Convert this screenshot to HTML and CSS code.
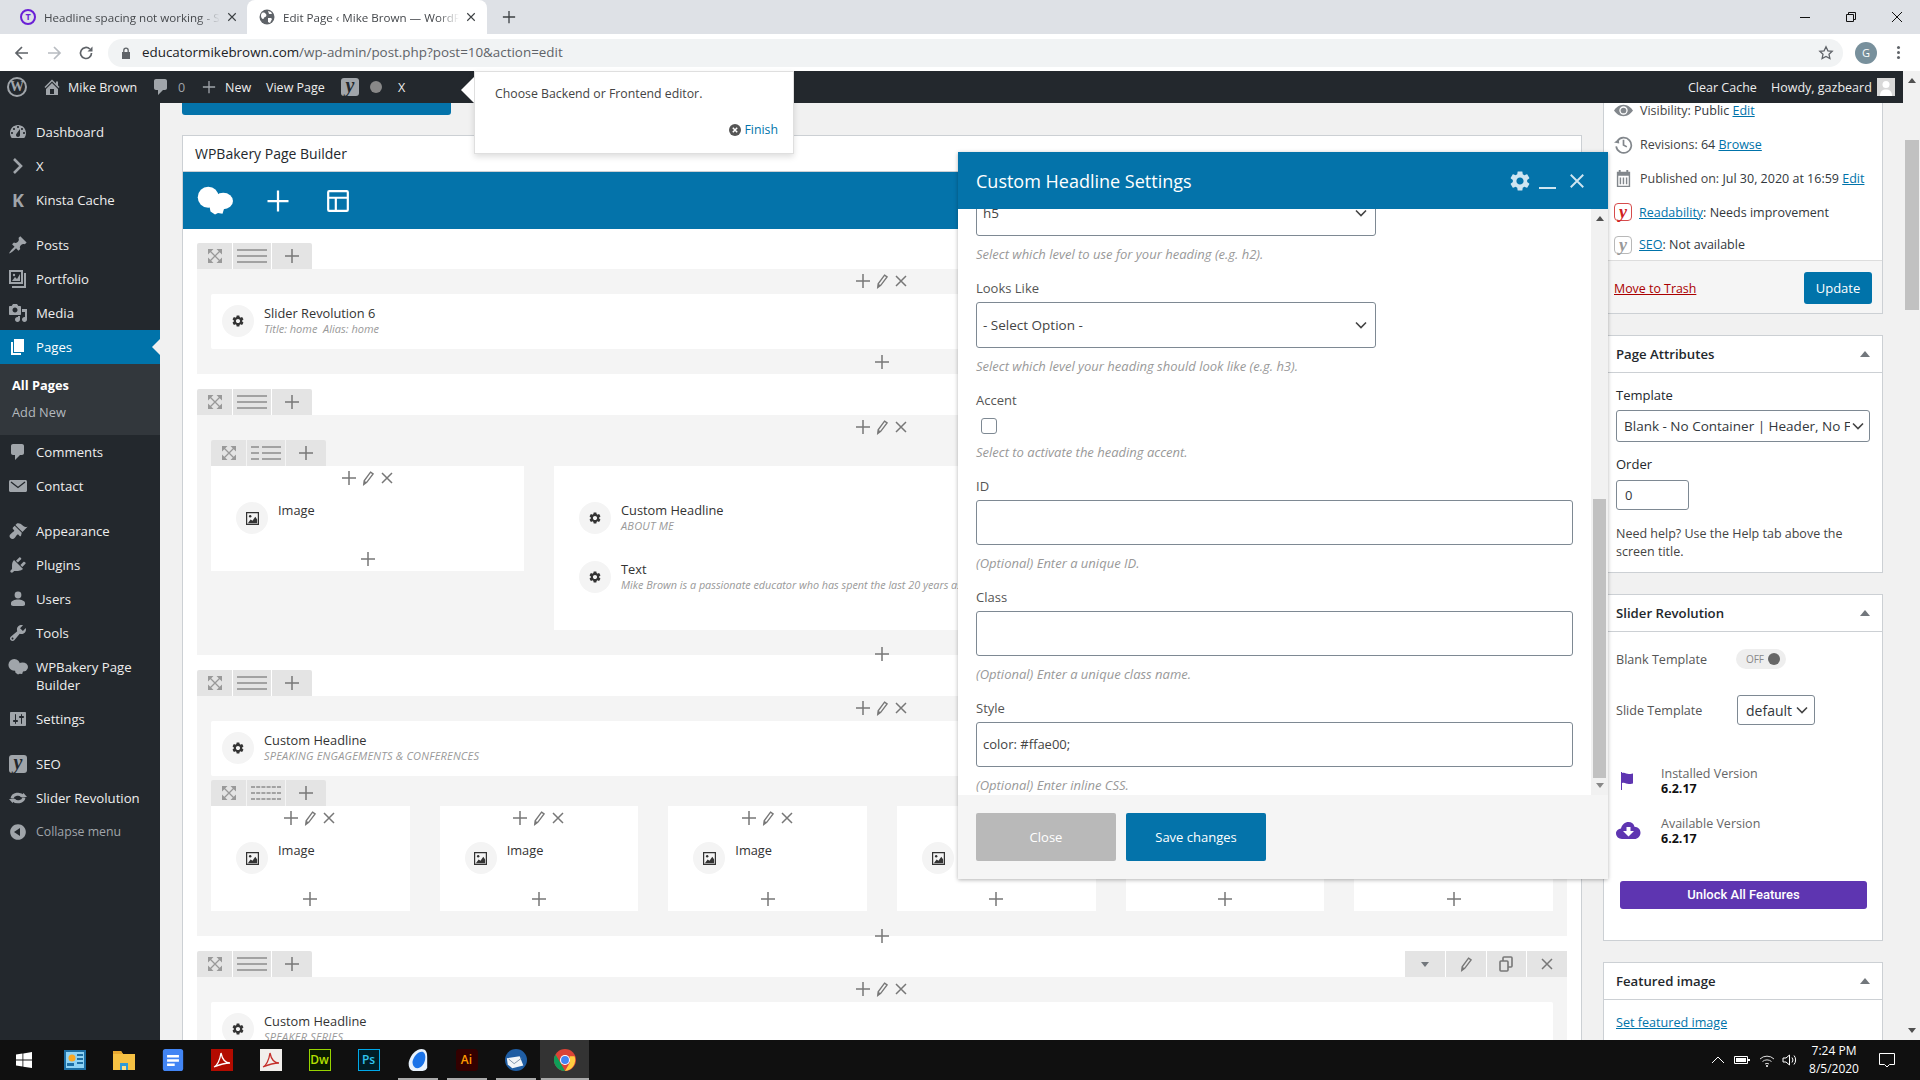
FILE: index.html
```html
<!DOCTYPE html>
<html lang="en">
<head>
<meta charset="utf-8">
<title>Edit Page ‹ Mike Brown — WordPress</title>
<link rel="stylesheet" href="styles.css">
</head>
<body>
<svg class="defs" aria-hidden="true">
  <defs>
    <symbol id="dash" viewBox="0 0 20 20"><path fill="currentColor" fill-rule="evenodd" d="M3.76 16h12.48c1.100-1.370 1.760-3.110 1.760-5 0-4.420-3.580-8-8-8s-8 3.580-8 8c0 1.890.66 3.630 1.760 5zM10 4c.55 0 1 .45 1 1s-.45 1-1 1-1-.45-1-1 .45-1 1-1zM6 6c.55 0 1 .45 1 1s-.45 1-1 1-1-.45-1-1 .45-1 1-1zm8 0c.55 0 1 .45 1 1s-.45 1-1 1-1-.45-1-1 .45-1 1-1zm-5.370 5.550L12 7v6c0 1.100-.9 2-2 2s-2-.9-2-2c0-.57.24-1.080.63-1.450zM4 10c.55 0 1 .45 1 1s-.45 1-1 1-1-.45-1-1 .45-1 1-1zm12 0c.55 0 1 .45 1 1s-.45 1-1 1-1-.45-1-1 .45-1 1-1z"/></symbol>
    <symbol id="chev" viewBox="0 0 20 20"><path fill="none" stroke="currentColor" stroke-width="2.600" d="M6 3l7 7-7 7"/></symbol>
    <symbol id="pin" viewBox="0 0 20 20"><path fill="currentColor" d="M10.440 3.020l1.820-1.820 6.360 6.350-1.830 1.820c-1.050-.68-2.480-.57-3.410.36l-.75.75c-.92.93-1.040 2.350-.35 3.410l-1.830 1.820-2.410-2.410-2.800 2.790c-.42.42-3.380 2.710-3.800 2.290s1.860-3.390 2.280-3.810l2.790-2.790L4.100 9.360l1.830-1.820c1.050.69 2.480.57 3.400-.36l.75-.75c.93-.92 1.050-2.350.36-3.410z"/></symbol>
    <symbol id="folio" viewBox="0 0 20 20"><path fill="currentColor" fill-rule="evenodd" d="M1 1h14v14H1zM3 3v10h10V3zM16 4h2v15H4v-2h12z"/><path fill="currentColor" d="M4 12l3-4 2 2 3-5v7z"/><circle cx="6" cy="6" r="1.200" fill="currentColor"/></symbol>
    <symbol id="media" viewBox="0 0 20 20"><path fill="currentColor" fill-rule="evenodd" d="M13 11V4c0-.55-.45-1-1-1h-1.670L9 1H5L3.670 3H2c-.55 0-1 .45-1 1v7c0 .55.45 1 1 1h10c.55 0 1-.45 1-1zM7 4.500c1.380 0 2.500 1.120 2.500 2.500S8.380 9.500 7 9.500 4.500 8.380 4.500 7 5.620 4.500 7 4.500z"/><path fill="currentColor" d="M14 6h5v10.500c0 1.380-1.120 2.500-2.500 2.500S14 17.880 14 16.500s1.120-2.500 2.500-2.500c.17 0 .34.020.5.050V9h-3V6zm-4 8.050V13h2v3.500c0 1.380-1.120 2.500-2.500 2.500S7 17.880 7 16.500 8.120 14 9.500 14c.17 0 .34.020.5.050z"/></symbol>
    <symbol id="page" viewBox="0 0 20 20"><path fill="currentColor" d="M6 15V2h10v13H6zm-1 1h8v2H3V5h2v11z"/></symbol>
    <symbol id="comment" viewBox="0 0 20 20"><path fill="currentColor" d="M5 2h9c1.100 0 2 .9 2 2v7c0 1.100-.9 2-2 2h-2l-5 5v-5H5c-1.100 0-2-.9-2-2V4c0-1.100.9-2 2-2z"/></symbol>
    <symbol id="mail" viewBox="0 0 20 20"><path fill="currentColor" d="M19 14.500v-9c0-.83-.67-1.500-1.500-1.500H2.500C1.670 4 1 4.670 1 5.500v9c0 .83.67 1.500 1.500 1.500h15c.83 0 1.500-.67 1.500-1.500z"/><path fill="none" stroke="#23282d" stroke-width="1.300" d="M3 6l7 5.500L17 6"/></symbol>
    <symbol id="brush" viewBox="0 0 20 20"><path fill="currentColor" d="M14.480 11.060L7.410 3.990l1.500-1.500c.5-.56 2.300-.47 3.510.32 1.210.8 1.430 1.280 2.910 2.100 1.180.64 2.450 1.260 4.230.91zm-.71.71L6.700 4.700 4.930 6.470c-.39.39-.39 1.020 0 1.410l1.060 1.060c.39.39.39 1.030 0 1.420-.6.6-1.430 1.110-2.210 1.690-.35.26-.7.53-1.010.84C1.430 13.710.96 15.650 2.390 17.080c1.430 1.430 3.360.96 4.200-.04.31-.31.58-.66.84-1.010.58-.78 1.090-1.610 1.690-2.210.39-.39 1.020-.39 1.410 0l1.060 1.060c.39.39 1.020.39 1.410 0z"/></symbol>
    <symbol id="plug" viewBox="0 0 20 20"><path fill="currentColor" d="M13.110 4.360L9.870 7.600 8 5.730l3.240-3.240c.35-.34 1.050-.2 1.560.32.52.51.66 1.210.31 1.550zm-8 1.770l.91-1.120 9.010 9.010-1.190.84c-.71.71-2.630 1.160-3.820 1.160H6.140L4.900 17.260c-.59.59-1.540.59-2.120 0-.59-.58-.59-1.530 0-2.120l1.240-1.240v-3.880c0-1.130.4-3.190 1.090-3.890zm7.260 3.970l3.240-3.240c.34-.35 1.040-.21 1.550.31.52.51.66 1.210.31 1.550l-3.240 3.250z"/></symbol>
    <symbol id="user" viewBox="0 0 20 20"><circle cx="10" cy="6" r="3.400" fill="currentColor"/><path fill="currentColor" d="M10 10.500c3.200 0 7 1.200 7 3.500v1.600c0 1-1 1.400-2 1.400H5c-1 0-2-.4-2-1.400V14c0-2.300 3.800-3.500 7-3.500z"/></symbol>
    <symbol id="wrench" viewBox="0 0 20 20"><path fill="currentColor" fill-rule="evenodd" d="M16.680 9.770c-1.340 1.340-3.300 1.670-4.950.99l-5.410 6.520c-.99.99-2.590.99-3.580 0s-.99-2.590 0-3.570l6.520-5.420c-.68-1.650-.35-3.610.99-4.950 1.280-1.280 3.120-1.620 4.720-1.060l-2.890 2.890 2.820 2.820 2.860-2.870c.53 1.590.19 3.410-1.080 4.670zM3.810 16.210c.4.390 1.030.39 1.420 0 .4-.4.4-1.030 0-1.430-.39-.39-1.020-.39-1.420 0-.39.4-.39 1.030 0 1.430z"/></symbol>
    <symbol id="cloud" viewBox="0 0 24 20"><circle cx="7.500" cy="7.500" r="7" fill="currentColor"/><ellipse cx="17.500" cy="10" rx="6.500" ry="5.500" fill="currentColor"/><path fill="currentColor" d="M8 12h11l-2 6.500-3-.5-2 1-3-2z"/></symbol>
    <symbol id="sliders" viewBox="0 0 20 20"><path fill="currentColor" fill-rule="evenodd" d="M18 16V4c0-.55-.45-1-1-1H3c-.55 0-1 .45-1 1v12c0 .55.45 1 1 1h14c.55 0 1-.45 1-1zM8 11h1c.55 0 1 .45 1 1s-.45 1-1 1H8v1.500c0 .28-.22.5-.5.5s-.5-.22-.5-.5V13H6c-.55 0-1-.45-1-1s.45-1 1-1h1V5.500c0-.28.22-.5.5-.5s.5.22.5.5V11zm5-2h-1c-.55 0-1-.45-1-1s.45-1 1-1h1V5.500c0-.28.22-.5.5-.5s.5.22.5.5V7h1c.55 0 1 .45 1 1s-.45 1-1 1h-1v5.500c0 .28-.22.5-.5.5s-.5-.22-.5-.5V9z"/></symbol>
    <symbol id="revo" viewBox="0 0 20 20"><path fill="none" stroke="currentColor" stroke-width="3" d="M4 10.500a6 5 0 0 1 11-2M16 9.500a6 5 0 0 1-11 2"/><path fill="currentColor" d="M12 9h7l-3.500-4zM8 11H1l3.500 4z"/></symbol>
    <symbol id="collapse" viewBox="0 0 20 20"><path fill="currentColor" fill-rule="evenodd" d="M10 2.160c4.330 0 7.840 3.510 7.840 7.840s-3.510 7.840-7.840 7.840S2.160 14.330 2.160 10 5.670 2.160 10 2.160zm2 11.840V6l-6 4z"/></symbol>
    <symbol id="home" viewBox="0 0 20 20"><path fill="currentColor" fill-rule="evenodd" d="M16 8.500l1.530 1.530-1.060 1.060L10 4.620l-6.470 6.470-1.060-1.060L10 2.500l4 4v-2h2v4zM10 6.040l6 5.990V18H4v-5.970zM12 17v-5H8v5h4z"/></symbol>
    <symbol id="plus" viewBox="0 0 16 16"><path fill="none" stroke="currentColor" stroke-width="1.500" d="M8 1v14M1 8h14"/></symbol>
    <symbol id="times" viewBox="0 0 16 16"><path fill="none" stroke="currentColor" stroke-width="1.500" d="M3 3l10 10M13 3L3 13"/></symbol>
    <symbol id="pencil" viewBox="0 0 16 20"><path fill="none" stroke="currentColor" stroke-width="1.600" d="M11 2.500l3 2-7.500 10-3.500 2.500.5-4.300z"/><path fill="currentColor" d="M3.500 12.700l3 1.800-3.500 2.500z"/></symbol>
    <symbol id="expand" viewBox="0 0 14 14"><path fill="none" stroke="currentColor" stroke-width="1.300" d="M2 2l10 10M12 2L2 12"/><path fill="currentColor" d="M0 0h5.500L0 5.500zM14 0v5.500L8.500 0zM0 14V8.500L5.500 14zM14 14H8.500L14 8.500z"/></symbol>
    <symbol id="lines" viewBox="0 0 30 14"><path fill="currentColor" d="M0 0h30v2H0zM0 6h30v2H0zM0 12h30v2H0z"/></symbol>
    <symbol id="lines2" viewBox="0 0 30 14"><path fill="currentColor" d="M0 0h8v2H0zM11 0h19v2H11zM0 6h8v2H0zM11 6h19v2H11zM0 12h8v2H0zM11 12h19v2H11z"/></symbol>
    <symbol id="lines6" viewBox="0 0 30 14"><path fill="none" stroke="currentColor" stroke-width="2" stroke-dasharray="4 1.200" d="M0 1h30M0 7h30M0 13h30"/></symbol>
    <symbol id="gear" viewBox="0 0 24 24"><path fill="currentColor" fill-rule="evenodd" d="M19.140 12.940c.04-.3.06-.61.06-.94 0-.32-.02-.64-.07-.94l2.030-1.580c.18-.14.23-.41.12-.61l-1.920-3.320c-.12-.22-.37-.29-.59-.22l-2.390.96c-.5-.38-1.030-.7-1.620-.94l-.36-2.540c-.04-.24-.24-.41-.48-.41h-3.840c-.24 0-.43.17-.47.41l-.36 2.540c-.59.24-1.130.57-1.620.94l-2.390-.96c-.22-.08-.47 0-.59.22L2.740 8.870c-.12.21-.08.47.12.61l2.030 1.580c-.05.3-.09.63-.09.94s.02.64.07.94l-2.030 1.580c-.18.14-.23.41-.12.61l1.920 3.320c.12.22.37.29.59.22l2.390-.96c.5.38 1.030.7 1.620.94l.36 2.540c.05.24.24.41.48.41h3.840c.24 0 .44-.17.47-.41l.36-2.540c.59-.24 1.130-.56 1.620-.94l2.390.96c.22.08.47 0 .59-.22l1.920-3.320c.12-.22.07-.47-.12-.61l-2.010-1.580zM12 15.600c-1.980 0-3.600-1.620-3.600-3.600s1.620-3.600 3.600-3.600 3.600 1.620 3.600 3.600-1.620 3.600-3.600 3.600z"/></symbol>
    <symbol id="pic" viewBox="0 0 14 14"><path fill="currentColor" fill-rule="evenodd" d="M0 0h14v14H0zM1.300 1.300v11.400h11.400V1.300z"/><path fill="currentColor" d="M2 12l3-4 2 1.500L10 5l2 3v4z"/><circle cx="4.500" cy="4.500" r="1.300" fill="currentColor"/></symbol>
    <symbol id="caret" viewBox="0 0 10 6"><path fill="currentColor" d="M5 0l5 6H0z"/></symbol>
    <symbol id="vee" viewBox="0 0 12 8"><path fill="none" stroke="currentColor" stroke-width="1.600" d="M1 1.500l5 5 5-5"/></symbol>
  </defs>
</svg>

<div class="app">
  <header class="tabstrip">
    <div class="tab">
      <span class="fav fav-t">T</span>
      <span class="tab-title">Headline spacing not working - Support</span>
      <svg class="tab-x"><use href="#times"/></svg>
    </div>
    <div class="tab tab-on">
      <svg class="fav" viewBox="0 0 16 16"><circle cx="8" cy="8" r="7.500" fill="#5f6368"/><path fill="#fff" d="M3 4c2-1 3 0 4 1s0 3-1 3-1 2-2 2-2-2-2-3 0-2 1-3zM9 9h3l1 1-2 4-2-1zM9 2l3 1 1 2-3 0z"/></svg>
      <span class="tab-title">Edit Page ‹ Mike Brown — WordPress</span>
      <svg class="tab-x"><use href="#times"/></svg>
    </div>
    <svg class="tab-new"><use href="#plus"/></svg>
    <div class="winbtns">
      <svg viewBox="0 0 12 12"><path fill="none" stroke="#111" d="M1 6.500h10"/></svg>
      <svg viewBox="0 0 12 12"><path fill="none" stroke="#111" d="M1.500 3.500h7v7h-7zM3.500 3.500v-2h7v7h-2"/></svg>
      <svg viewBox="0 0 12 12"><path fill="none" stroke="#111" d="M1 1l10 10M11 1L1 11"/></svg>
    </div>
  </header>

  <nav class="toolbar">
    <svg class="nav-i" viewBox="0 0 16 16"><path fill="none" stroke="#5f6368" stroke-width="1.700" d="M14 8H2.500M8 2L2 8l6 6"/></svg>
    <svg class="nav-i nav-off" viewBox="0 0 16 16"><path fill="none" stroke="#b8bcc1" stroke-width="1.700" d="M2 8h11.500M8 2l6 6-6 6"/></svg>
    <svg class="nav-i" viewBox="0 0 16 16"><path fill="none" stroke="#5f6368" stroke-width="1.700" d="M13.500 8a5.500 5.500 0 1 1-1.700-4"/><path fill="#5f6368" d="M14.500 1.500v5h-5z"/></svg>
    <div class="omni">
      <svg class="lock" viewBox="0 0 10 12"><path fill="#5f6368" d="M1 5h8v7H1z"/><path fill="none" stroke="#5f6368" stroke-width="1.300" d="M2.800 5V3.400a2.200 2.200 0 0 1 4.400 0V5"/></svg>
      <span class="url"><b>educatormikebrown.com</b>/wp-admin/post.php?post=10&amp;action=edit</span>
      <svg class="star" viewBox="0 0 16 16"><path fill="none" stroke="#5f6368" stroke-width="1.300" d="M8 1.800l1.900 4 4.300.5-3.200 3 .9 4.300L8 11.500l-3.900 2.100.9-4.300-3.200-3 4.300-.5z"/></svg>
    </div>
    <span class="avatar">G</span>
    <span class="kebab"></span>
  </nav>

  <div class="window">
    <div class="page">
      <div class="adminbar">
        <span class="wplogo">W</span>
        <svg class="ab-i ab-home"><use href="#home"/></svg>
        <span class="ab-t ab-name">Mike Brown</span>
        <svg class="ab-i ab-com"><use href="#comment"/></svg>
        <span class="ab-count">0</span>
        <svg class="ab-plus"><use href="#plus"/></svg>
        <span class="ab-t ab-new">New</span>
        <span class="ab-t ab-view">View Page</span>
        <span class="yoast ab-yoast">y</span>
        <span class="ab-dot"></span>
        <span class="ab-t ab-x">X</span>
        <span class="ab-spacer"></span>
        <span class="ab-t ab-clear">Clear Cache</span>
        <span class="ab-t ab-howdy">Howdy, gazbeard</span>
        <span class="ab-ava"><svg viewBox="0 0 18 18"><circle cx="9" cy="6.500" r="3.500" fill="#fff"/><path fill="#fff" d="M3 18c0-5 2.500-6.500 6-6.500s6 1.500 6 6.500z"/></svg></span>
      </div>

      <div class="wpbody">
        <aside class="sidebar">
          <ul class="menu">
            <li class="mi"><svg class="mi-i"><use href="#dash"/></svg><span>Dashboard</span></li>
            <li class="mi"><svg class="mi-i"><use href="#chev"/></svg><span>X</span></li>
            <li class="mi"><span class="mi-k">K</span><span>Kinsta Cache</span></li>
            <li class="msep"></li>
            <li class="mi"><svg class="mi-i"><use href="#pin"/></svg><span>Posts</span></li>
            <li class="mi"><svg class="mi-i"><use href="#folio"/></svg><span>Portfolio</span></li>
            <li class="mi"><svg class="mi-i"><use href="#media"/></svg><span>Media</span></li>
            <li class="mi mi-on"><svg class="mi-i"><use href="#page"/></svg><span>Pages</span></li>
            <li class="sub"><div class="sub-on">All Pages</div><div class="sub-i">Add New</div></li>
            <li class="mi"><svg class="mi-i"><use href="#comment"/></svg><span>Comments</span></li>
            <li class="mi"><svg class="mi-i"><use href="#mail"/></svg><span>Contact</span></li>
            <li class="msep"></li>
            <li class="mi"><svg class="mi-i"><use href="#brush"/></svg><span>Appearance</span></li>
            <li class="mi"><svg class="mi-i"><use href="#plug"/></svg><span>Plugins</span></li>
            <li class="mi"><svg class="mi-i"><use href="#user"/></svg><span>Users</span></li>
            <li class="mi"><svg class="mi-i"><use href="#wrench"/></svg><span>Tools</span></li>
            <li class="mi mi-two"><svg class="mi-i"><use href="#cloud"/></svg><span>WPBakery Page Builder</span></li>
            <li class="mi"><svg class="mi-i"><use href="#sliders"/></svg><span>Settings</span></li>
            <li class="msep"></li>
            <li class="mi"><span class="yoast mi-yoast">y</span><span>SEO</span></li>
            <li class="mi"><svg class="mi-i"><use href="#revo"/></svg><span>Slider Revolution</span></li>
            <li class="mi mi-dim"><svg class="mi-i"><use href="#collapse"/></svg><span>Collapse menu</span></li>
          </ul>
        </aside>

        <main class="content">
          <section class="leftcol">
            <div class="topbtn"></div>
            <div class="builder">
              <h2 class="builder-h">WPBakery Page Builder</h2>
              <div class="vc-bar">
                <svg class="vc-cloud"><use href="#cloud"/></svg>
                <svg class="vc-plus"><use href="#plus"/></svg>
                <svg class="vc-tpl" viewBox="0 0 22 22"><path fill="none" stroke="currentColor" stroke-width="2" d="M2 3a1 1 0 0 1 1-1h16a1 1 0 0 1 1 1v16a1 1 0 0 1-1 1H3a1 1 0 0 1-1-1zM2 8h18M9 8v12"/></svg>
              </div>
              <div class="rows">

                <div class="rowbar">
                  <span class="rb rb-a"><svg class="i-exp"><use href="#expand"/></svg></span>
                  <span class="rb rb-b"><svg class="i-lines"><use href="#lines"/></svg></span>
                  <span class="rb rb-c"><svg class="i-plus"><use href="#plus"/></svg></span>
                </div>
                <div class="row">
                  <div class="ctl"><svg class="i-plus"><use href="#plus"/></svg><svg class="i-pen"><use href="#pencil"/></svg><svg class="i-x"><use href="#times"/></svg></div>
                  <div class="el el-row">
                    <span class="el-ic"><svg class="i-gear"><use href="#gear"/></svg></span>
                    <div><div class="el-t">Slider Revolution 6</div><div class="el-s">Title: home&nbsp; Alias: home</div></div>
                  </div>
                  <div class="foot"><svg class="i-plus"><use href="#plus"/></svg></div>
                </div>

                <div class="rowbar">
                  <span class="rb rb-a"><svg class="i-exp"><use href="#expand"/></svg></span>
                  <span class="rb rb-b"><svg class="i-lines"><use href="#lines"/></svg></span>
                  <span class="rb rb-c"><svg class="i-plus"><use href="#plus"/></svg></span>
                </div>
                <div class="row">
                  <div class="ctl"><svg class="i-plus"><use href="#plus"/></svg><svg class="i-pen"><use href="#pencil"/></svg><svg class="i-x"><use href="#times"/></svg></div>
                  <div class="rowbar rowbar-in">
                    <span class="rb rb-a"><svg class="i-exp"><use href="#expand"/></svg></span>
                    <span class="rb rb-b"><svg class="i-lines"><use href="#lines2"/></svg></span>
                    <span class="rb rb-c"><svg class="i-plus"><use href="#plus"/></svg></span>
                  </div>
                  <div class="cols cols-2">
                    <div class="col col-short">
                      <div class="ctl ctl-col"><svg class="i-plus"><use href="#plus"/></svg><svg class="i-pen"><use href="#pencil"/></svg><svg class="i-x"><use href="#times"/></svg></div>
                      <div class="el">
                        <span class="el-ic"><svg class="i-pic"><use href="#pic"/></svg></span>
                        <div class="el-t">Image</div>
                      </div>
                      <div class="foot-col"><svg class="i-plus"><use href="#plus"/></svg></div>
                    </div>
                    <div class="col">
                      <div class="ctl ctl-col"></div>
                      <div class="el">
                        <span class="el-ic"><svg class="i-gear"><use href="#gear"/></svg></span>
                        <div><div class="el-t">Custom Headline</div><div class="el-s el-caps">ABOUT ME</div></div>
                      </div>
                      <div class="el el-next">
                        <span class="el-ic"><svg class="i-gear"><use href="#gear"/></svg></span>
                        <div><div class="el-t">Text</div><div class="el-s el-long">Mike Brown is a passionate educator who has spent the last 20 years as an educator and speaker</div></div>
                      </div>
                    </div>
                  </div>
                  <div class="foot foot-low"><svg class="i-plus"><use href="#plus"/></svg></div>
                </div>

                <div class="rowbar">
                  <span class="rb rb-a"><svg class="i-exp"><use href="#expand"/></svg></span>
                  <span class="rb rb-b"><svg class="i-lines"><use href="#lines"/></svg></span>
                  <span class="rb rb-c"><svg class="i-plus"><use href="#plus"/></svg></span>
                </div>
                <div class="row">
                  <div class="ctl"><svg class="i-plus"><use href="#plus"/></svg><svg class="i-pen"><use href="#pencil"/></svg><svg class="i-x"><use href="#times"/></svg></div>
                  <div class="el el-row">
                    <span class="el-ic"><svg class="i-gear"><use href="#gear"/></svg></span>
                    <div><div class="el-t">Custom Headline</div><div class="el-s el-caps">SPEAKING ENGAGEMENTS &amp; CONFERENCES</div></div>
                  </div>
                  <div class="rowbar rowbar-in rowbar-gap">
                    <span class="rb rb-a"><svg class="i-exp"><use href="#expand"/></svg></span>
                    <span class="rb rb-b"><svg class="i-lines"><use href="#lines6"/></svg></span>
                    <span class="rb rb-c"><svg class="i-plus"><use href="#plus"/></svg></span>
                  </div>
                  <div class="cols cols-6">
                    <div class="col">
                      <div class="ctl ctl-col"><svg class="i-plus"><use href="#plus"/></svg><svg class="i-pen"><use href="#pencil"/></svg><svg class="i-x"><use href="#times"/></svg></div>
                      <div class="el"><span class="el-ic"><svg class="i-pic"><use href="#pic"/></svg></span><div class="el-t">Image</div></div>
                      <div class="foot-col"><svg class="i-plus"><use href="#plus"/></svg></div>
                    </div>
                    <div class="col">
                      <div class="ctl ctl-col"><svg class="i-plus"><use href="#plus"/></svg><svg class="i-pen"><use href="#pencil"/></svg><svg class="i-x"><use href="#times"/></svg></div>
                      <div class="el"><span class="el-ic"><svg class="i-pic"><use href="#pic"/></svg></span><div class="el-t">Image</div></div>
                      <div class="foot-col"><svg class="i-plus"><use href="#plus"/></svg></div>
                    </div>
                    <div class="col">
                      <div class="ctl ctl-col"><svg class="i-plus"><use href="#plus"/></svg><svg class="i-pen"><use href="#pencil"/></svg><svg class="i-x"><use href="#times"/></svg></div>
                      <div class="el"><span class="el-ic"><svg class="i-pic"><use href="#pic"/></svg></span><div class="el-t">Image</div></div>
                      <div class="foot-col"><svg class="i-plus"><use href="#plus"/></svg></div>
                    </div>
                    <div class="col">
                      <div class="ctl ctl-col"></div>
                      <div class="el"><span class="el-ic"><svg class="i-pic"><use href="#pic"/></svg></span><div class="el-t">Image</div></div>
                      <div class="foot-col"><svg class="i-plus"><use href="#plus"/></svg></div>
                    </div>
                    <div class="col">
                      <div class="ctl ctl-col"></div>
                      <div class="el"></div>
                      <div class="foot-col"><svg class="i-plus"><use href="#plus"/></svg></div>
                    </div>
                    <div class="col">
                      <div class="ctl ctl-col"></div>
                      <div class="el"></div>
                      <div class="foot-col"><svg class="i-plus"><use href="#plus"/></svg></div>
                    </div>
                  </div>
                  <div class="foot foot-edge"><svg class="i-plus"><use href="#plus"/></svg></div>
                </div>

                <div class="rowbar rowbar-split">
                  <div class="rb-group">
                    <span class="rb rb-a"><svg class="i-exp"><use href="#expand"/></svg></span>
                    <span class="rb rb-b"><svg class="i-lines"><use href="#lines"/></svg></span>
                    <span class="rb rb-c"><svg class="i-plus"><use href="#plus"/></svg></span>
                  </div>
                  <div class="rb-group">
                    <span class="rb rb-r"><svg class="i-caret-d"><use href="#caret"/></svg></span>
                    <span class="rb rb-r"><svg class="i-pen"><use href="#pencil"/></svg></span>
                    <span class="rb rb-r"><svg class="i-copy" viewBox="0 0 14 16"><path fill="none" stroke="currentColor" stroke-width="1.600" d="M1 6a1 1 0 0 1 1-1h6a1 1 0 0 1 1 1v8a1 1 0 0 1-1 1H2a1 1 0 0 1-1-1zM4 5V2a1 1 0 0 1 1-1h7a1 1 0 0 1 1 1v8a1 1 0 0 1-1 1H9"/></svg></span>
                    <span class="rb rb-r"><svg class="i-x"><use href="#times"/></svg></span>
                  </div>
                </div>
                <div class="row">
                  <div class="ctl"><svg class="i-plus"><use href="#plus"/></svg><svg class="i-pen"><use href="#pencil"/></svg><svg class="i-x"><use href="#times"/></svg></div>
                  <div class="el el-row">
                    <span class="el-ic"><svg class="i-gear"><use href="#gear"/></svg></span>
                    <div><div class="el-t">Custom Headline</div><div class="el-s el-caps">SPEAKER SERIES</div></div>
                  </div>
                </div>

              </div>
            </div>
          </section>

          <section class="rightcol">
            <div class="box box-pub">
              <div class="pub-row"><svg class="pub-i" viewBox="0 0 20 20"><path fill="#82878c" fill-rule="evenodd" d="M10 4c4.400 0 8 3 10 6-2 3-5.600 6-10 6S2 13 0 10c2-3 5.600-6 10-6zm0 1.600A4.400 4.400 0 1 0 10 14.400 4.400 4.400 0 0 0 10 5.600z"/><circle cx="10" cy="10" r="3" fill="#82878c"/></svg><span>Visibility: <b>Public</b> <a>Edit</a></span></div>
              <div class="pub-row"><svg class="pub-i" viewBox="0 0 20 20"><path fill="none" stroke="#82878c" stroke-width="1.800" d="M3.500 6.500A8 8 0 1 1 2.300 12M10 5v5.500l3.500 2"/><path fill="#82878c" d="M0 8l5-3.500L5.500 9z"/></svg><span>Revisions: <b>64</b> <a>Browse</a></span></div>
              <div class="pub-row"><svg class="pub-i" viewBox="0 0 20 20"><path fill="#82878c" fill-rule="evenodd" d="M3 3h2V1h2v2h6V1h2v2h2v16H3zM4.500 7v10.500h11V7z"/><path fill="#82878c" d="M6 9h1.500v7H6zM9.200 9h1.500v7H9.200zM12.500 9H14v7h-1.500z"/></svg><span>Published on: <b>Jul 30, 2020 at 16:59</b> <a>Edit</a></span></div>
              <div class="pub-row"><span class="yoast-out yoast-red">y</span><span><a>Readability</a>: <b>Needs improvement</b></span></div>
              <div class="pub-row pub-last"><span class="yoast-out">y</span><span><a>SEO</a>: <b>Not available</b></span></div>
              <div class="pub-foot"><a class="trash">Move to Trash</a><span class="btn-update">Update</span></div>
            </div>

            <div class="box box-attr">
              <div class="box-h"><h3>Page Attributes</h3><svg class="i-caret"><use href="#caret"/></svg></div>
              <div class="box-b">
                <div class="f-l">Template</div>
                <div class="sel sel-tpl"><span class="sel-clip">Blank - No Container | Header, No Footer</span><svg class="i-vee"><use href="#vee"/></svg></div>
                <div class="f-l f-l2">Order</div>
                <div class="num">0</div>
                <p class="help">Need help? Use the Help tab above the screen title.</p>
              </div>
            </div>

            <div class="box box-rev">
              <div class="box-h"><h3>Slider Revolution</h3><svg class="i-caret"><use href="#caret"/></svg></div>
              <div class="box-b">
                <div class="rev-line"><span class="rev-l">Blank Template</span><span class="toggle"><span>OFF</span><i></i></span></div>
                <div class="rev-line rev-line2"><span class="rev-l">Slide Template</span><span class="sel sel-def">default<svg class="i-vee"><use href="#vee"/></svg></span></div>
                <div class="ver ver-1"><svg class="ver-i" viewBox="0 0 25 18"><path fill="#5e35b1" d="M5 0h1v18H5zM6 1c3-1 4 1 7 1 2 0 4-.5 4-.5v10s-2 .5-4 .5c-3 0-4-2-7-1z"/></svg><div><div class="ver-l">Installed Version</div><div class="ver-n">6.2.17</div></div></div>
                <div class="ver"><svg class="ver-i" viewBox="0 0 25 18"><path fill="#5e35b1" d="M12.500 0c3 0 5.500 2 6 4.700 3.400.2 6 2.300 6 6 0 3.700-3 6.300-6 6.300H6c-3.200 0-6-2.300-6-5.700C0 8.500 2.500 6.800 5 6.500 6 2.600 9 0 12.500 0z"/><path fill="#fff" d="M10.500 5h4v4H18l-5.500 5.500L7 9h3.500z"/></svg><div><div class="ver-l">Available Version</div><div class="ver-n">6.2.17</div></div></div>
                <div class="unlock">Unlock All Features</div>
              </div>
            </div>

            <div class="box box-feat">
              <div class="box-h"><h3>Featured image</h3><svg class="i-caret"><use href="#caret"/></svg></div>
              <div class="box-b"><a class="setimg">Set featured image</a></div>
            </div>
          </section>
        </main>
      </div>
    </div>

    <div class="pagebar">
      <svg class="pb-up"><use href="#caret"/></svg>
      <span class="pb-thumb"></span>
      <span class="pb-fill"></span>
      <svg class="pb-down"><use href="#caret"/></svg>
    </div>
  </div>

  <footer class="taskbar">
    <span class="tk tk-start"><svg viewBox="0 0 16 16"><path fill="#fff" d="M0 2.400L6.500 1.500v6H0zM7.300 1.400L16 0v7.500H7.300zM0 8.400h6.500v6L0 13.600zM7.300 8.400H16V16l-8.700-1.300z"/></svg></span>
    <span class="tk"><svg viewBox="0 0 22 20"><path fill="#1d6fa5" d="M0 0h22v20H0z"/><path fill="#8fd3f5" d="M2 2h18v16H2z"/><circle cx="8" cy="8" r="3.500" fill="#f9a825"/><path fill="#1d6fa5" d="M3 13h7v3H3zM13 4h6v2h-6zM13 8h6v2h-6zM13 12h6v2h-6z"/></svg></span>
    <span class="tk"><svg viewBox="0 0 22 20"><path fill="#f6c143" d="M0 1h8l2 3h12v16H0z"/><path fill="#e8a830" d="M0 1h8l2 3H0z"/><path fill="#2e9bd8" d="M7 13h8v7H7z"/><path fill="#fbe08a" d="M9 16h4v4H9z"/></svg></span>
    <span class="tk"><svg viewBox="0 0 24 26"><rect width="24" height="26" rx="3" fill="#4285f4"/><path fill="#fff" d="M5 7h14v3H5zM5 12h14v3H5zM5 17h9v3H5z"/></svg></span>
    <span class="tk"><svg viewBox="0 0 22 22"><path fill="#b30b00" d="M0 0h22v22H0z"/><path fill="none" stroke="#fff" stroke-width="1.300" d="M3 18c3-1 6-7 7-14 1 5 4 10 9 10-4 0-9 1-16 4z"/></svg></span>
    <span class="tk"><svg viewBox="0 0 22 22"><path fill="#f1efec" d="M0 0h22v22H0z"/><path fill="none" stroke="#c4302b" stroke-width="1.300" d="M3 18c3-1 6-7 7-14 1 5 4 10 9 10-4 0-9 1-16 4z"/></svg></span>
    <span class="tk"><span class="app-box app-dw">Dw</span></span>
    <span class="tk"><span class="app-box app-ps">Ps</span></span>
    <span class="tk"><svg viewBox="0 0 22 24"><path fill="#e8f2fc" d="M1 14C3 6 9 0 15 0c4 0 6 3 6 8v12c0 2-2 4-5 4H6c-3 0-6-4-5-10z"/><path fill="#1a73e8" d="M5 14C6 8 11 3 15 3c3 0 4 3 4 6 0 6-4 12-9 12-3 0-5-3-5-7z"/></svg></span>
    <span class="tk"><span class="app-box app-ai">Ai</span></span>
    <span class="tk"><svg viewBox="0 0 24 24"><circle cx="12" cy="12" r="12" fill="#1f5da3"/><path fill="#f2f5f8" d="M2 10l14-2 4 10-12 3-5-4z"/><path fill="none" stroke="#7a8ea6" d="M4 11l6 5 8-6"/></svg></span>
    <span class="tk tk-chrome"><svg viewBox="0 0 24 24"><circle cx="12" cy="12" r="12" fill="#db4437"/><path fill="#0f9d58" d="M12 24A12 12 0 0 1 1.600 6L7 15l5 9z"/><path fill="#ffcd40" d="M12 24l5.500-9.500L17 8h5.400A12 12 0 0 1 12 24z"/><circle cx="12" cy="12" r="5.500" fill="#fff"/><circle cx="12" cy="12" r="4.300" fill="#4285f4"/></svg></span>
    <span class="ul ul-1"></span><span class="ul ul-2"></span><span class="ul ul-3"></span><span class="ul ul-4"></span>
    <span class="tk-spacer"></span>
    <svg class="tray" viewBox="0 0 14 14"><path fill="none" stroke="#fff" d="M1 10l6-6 6 6"/></svg>
    <svg class="tray tray-bat" viewBox="0 0 16 14"><path fill="none" stroke="#fff" d="M.5 3.500h13v7H.5z"/><path fill="#fff" d="M2 5h10v4H2zM14 6h2v2h-2z"/></svg>
    <svg class="tray tray-wifi" viewBox="0 0 16 14"><path fill="none" stroke="#ddd" d="M1 6a10 10 0 0 1 14 0M3.500 8.500a7 7 0 0 1 9 0M6 11a3.500 3.500 0 0 1 4 0"/><circle cx="8" cy="13" r="1" fill="#fff"/></svg>
    <svg class="tray tray-vol" viewBox="0 0 16 14"><path fill="none" stroke="#fff" d="M1 5h3l3.500-3v10L4 9H1zM10 4.500a4 4 0 0 1 0 5M12 2.500a7 7 0 0 1 0 9"/></svg>
    <div class="clock"><div>7:24 PM</div><div>8/5/2020</div></div>
    <svg class="tray-note" viewBox="0 0 16 16"><path fill="none" stroke="#fff" d="M.5 1.500h15v11h-5L8 15l-2.500-2.500h-5z"/></svg>
  </footer>

  <aside class="pointer">
    <p class="pointer-t">Choose Backend or Frontend editor.</p>
    <div class="pointer-f"><span class="finish"><svg viewBox="0 0 12 12"><circle cx="6" cy="6" r="6" fill="#555"/><path stroke="#fff" stroke-width="1.500" d="M3.800 3.800l4.400 4.400M8.200 3.800L3.800 8.200"/></svg>Finish</span></div>
  </aside>

  <section class="modal">
    <header class="m-head">
      <h2>Custom Headline Settings</h2>
      <svg class="m-gear"><use href="#gear"/></svg>
      <span class="m-min"></span>
      <svg class="m-x"><use href="#times"/></svg>
    </header>
    <div class="m-main">
      <div class="m-body">
        <div class="m-sel m-sel-first"><span>h5</span><svg class="i-vee"><use href="#vee"/></svg></div>
        <p class="hint">Select which level to use for your heading (e.g. h2).</p>
        <label class="m-l">Looks Like</label>
        <div class="m-sel"><span>- Select Option -</span><svg class="i-vee"><use href="#vee"/></svg></div>
        <p class="hint">Select which level your heading should look like (e.g. h3).</p>
        <label class="m-l">Accent</label>
        <span class="check"></span>
        <p class="hint">Select to activate the heading accent.</p>
        <label class="m-l">ID</label>
        <div class="m-in"></div>
        <p class="hint">(Optional) Enter a unique ID.</p>
        <label class="m-l">Class</label>
        <div class="m-in"></div>
        <p class="hint">(Optional) Enter a unique class name.</p>
        <label class="m-l">Style</label>
        <div class="m-in">color: #ffae00;</div>
        <p class="hint">(Optional) Enter inline CSS.</p>
      </div>
      <div class="m-scroll">
        <svg class="ms-up"><use href="#caret"/></svg>
        <span class="ms-thumb"></span>
        <svg class="ms-down"><use href="#caret"/></svg>
      </div>
    </div>
    <footer class="m-foot">
      <span class="m-btn m-close">Close</span>
      <span class="m-btn m-save">Save changes</span>
    </footer>
  </section>
</div>
</body>
</html>
```
FILE: styles.css
```css
* { box-sizing: border-box; }
html, body { margin: 0; padding: 0; height: 100%; overflow: hidden; }
body { font-family: "Open Sans", "Liberation Sans", sans-serif; font-size: 13px; color: #444; background: #f1f1f1; }
h2, h3, p, ul { margin: 0; padding: 0; }
ul { list-style: none; }
svg { display: block; flex: none; }
.defs { width: 0; height: 0; position: absolute; }
a { color: #0073aa; text-decoration: underline; }

.app { position: relative; width: 1920px; height: 1080px; display: flex; flex-direction: column; overflow: hidden; }

/* browser tabs */
.tabstrip { height: 34px; background: #dee1e6; display: flex; align-items: center; flex: none; }
.tab { width: 247px; height: 34px; padding: 0 9px 0 20px; display: flex; align-items: center; font-size: 11.600px; color: #45484c; }
.tab-on { width: 240px; padding: 0 10px 0 12px; background: #fff; border-radius: 8px 8px 0 0; }
.fav { width: 16px; height: 16px; margin-right: 8px; flex: none; }
.fav-t { border: 2px solid #6a1fd6; border-radius: 50%; color: #6a1fd6; font-size: 9px; font-weight: 700; line-height: 12px; text-align: center; }
.tab-title { flex: 1; white-space: nowrap; overflow: hidden; margin-right: 6px; -webkit-mask-image: linear-gradient(90deg, #000 88%, transparent 100%); mask-image: linear-gradient(90deg, #000 88%, transparent 100%); }
.tab-x { width: 12px; height: 12px; color: #3c4043; }
.tab-new { width: 14px; height: 14px; margin-left: 15px; color: #3c4043; }
.winbtns { margin-left: auto; display: flex; gap: 34px; padding-right: 17px; }
.winbtns svg { width: 12px; height: 12px; }

/* browser toolbar */
.toolbar { height: 37px; background: #fff; display: flex; align-items: center; flex: none; padding-left: 14px; }
.nav-i { width: 16px; height: 16px; margin-right: 16px; }
.omni { width: 1735px; height: 28px; margin-left: -2px; background: #f1f3f4; border-radius: 14px; display: flex; align-items: center; padding-left: 13px; }
.lock { width: 10px; height: 12px; margin-right: 11px; }
.url { flex: 1; font-size: 13.400px; line-height: 26px; height: 28px; color: #5f6368; white-space: nowrap; }
.url b { font-weight: 400; color: #202124; }
.star { width: 16px; height: 16px; margin-right: 9px; }
.avatar { width: 22px; height: 22px; margin-left: 12px; border-radius: 50%; background: #78909c; color: #fff; font-size: 11px; line-height: 22px; text-align: center; }
.kebab { width: 3px; height: 3px; margin-left: 20px; border-radius: 50%; background: #5f6368; box-shadow: 0 -5px 0 #5f6368, 0 5px 0 #5f6368; }

/* window */
.window { flex: 1; display: flex; min-height: 0; }
.page { width: 1903px; display: flex; flex-direction: column; min-height: 0; }

/* admin bar */
.adminbar { height: 32px; background: #23282d; color: #eee; display: flex; align-items: center; flex: none; font-size: 12.500px; }
.ab-t { white-space: nowrap; }
.wplogo { width: 20px; height: 20px; margin-left: 7px; border: 2px solid #a0a5aa; border-radius: 50%; color: #a0a5aa; font: 700 14px/16px "Liberation Serif", serif; text-align: center; }
.ab-i { width: 20px; height: 20px; color: #a0a5aa; }
.ab-home { margin-left: 15px; }
.ab-name { margin-left: 6px; width: 70px; }
.ab-com { margin-left: 13px; }
.ab-count { margin-left: 7px; width: 10px; color: #a0a5aa; }
.ab-plus { width: 14px; height: 14px; margin-left: 14px; color: #a0a5aa; }
.ab-new { margin-left: 9px; width: 32px; }
.ab-view { margin-left: 9px; width: 62px; }
.yoast { display: inline-block; background: #a0a5aa; color: #23282d; border-radius: 3px; text-align: center; font: italic 700 20px/15px "Liberation Serif", serif; }
.ab-yoast { width: 18px; height: 18px; margin-left: 13px; }
.ab-dot { width: 12px; height: 12px; margin-left: 11px; border-radius: 50%; background: #888; }
.ab-x { margin-left: 16px; }
.ab-spacer { flex: 1; }
.ab-clear { width: 68px; }
.ab-howdy { margin-left: 15px; width: 100px; }
.ab-ava { width: 18px; height: 18px; margin: 0 8px 0 6px; background: #d8d8d8; }
.ab-ava svg { width: 18px; height: 18px; }

/* body */
.wpbody { flex: 1; display: flex; min-height: 0; overflow: hidden; }
.sidebar { width: 160px; flex: none; background: #23282d; color: #eee; padding-top: 12px; }
.mi { min-height: 34px; padding: 0 8px 0 36px; display: flex; align-items: center; position: relative; line-height: 18px; font-size: 13.200px; }
.mi-two { min-height: 52px; }
.mi-i { position: absolute; left: 8px; top: 7px; width: 20px; height: 20px; color: #a0a5aa; }
.mi-two .mi-i { top: 7px; }
.mi-k { position: absolute; left: 12px; top: 5px; font-size: 18px; font-weight: 700; line-height: 24px; color: #a0a5aa; }
.mi-yoast { position: absolute; left: 9px; top: 8px; width: 18px; height: 18px; }
.mi-on { background: #0073aa; color: #fff; }
.mi-on .mi-i { color: #fff; }
.mi-on::after { content: ""; position: absolute; right: 0; top: 9px; border: 8px solid transparent; border-right-color: #f1f1f1; border-left-width: 0; }
.msep { height: 11px; }
.sub { background: #32373c; padding: 8px 0 8px 12px; height: 71px; font-size: 12.800px; line-height: 27px; color: #b4b9be; }
.sub-on { font-weight: 700; color: #fff; }
.mi-dim { color: #a0a5aa; font-size: 12.300px; }

.content { flex: 1; display: flex; min-width: 0; gap: 21px; padding: 0 20px 0 22px; overflow: hidden; }
.leftcol { width: 1400px; flex: none; display: flex; flex-direction: column; }
.topbtn { width: 269px; height: 12px; flex: none; background: #0473aa; border-radius: 0 0 3px 3px; margin-bottom: 20px; }
.builder { background: #fff; border: 1px solid #ccd0d4; border-bottom: 0; flex: 1; }
.builder-h { height: 36px; padding-left: 12px; font-size: 14px; font-weight: 400; color: #23282d; line-height: 36px; border-bottom: 1px solid #ccd0d4; }
.vc-bar { height: 57px; background: #0473aa; color: #fff; display: flex; align-items: center; padding-left: 14px; }
.vc-cloud { width: 36px; height: 30px; }
.vc-plus { width: 24px; height: 24px; margin-left: 33px; }
.vc-tpl { width: 24px; height: 24px; margin-left: 36px; }
.rows { padding: 14px 14px 0; }

.rowbar { display: flex; height: 26px; gap: 1px; }
.rowbar-split { justify-content: space-between; }
.rb-group { display: flex; gap: 1px; }
.rowbar-in { margin-top: 0; }
.rowbar-gap { margin-top: 4px; }
.rb { height: 26px; background: #e4e4e4; display: flex; align-items: center; justify-content: center; color: #8a8a8a; }
.rb-a { width: 35px; border-radius: 2px 0 0 0; }
.rb-b { width: 38px; }
.rb-c { width: 40px; border-radius: 0 2px 0 0; color: #777; }
.rb-r { width: 39.750px; color: #777; }
.i-exp { width: 14px; height: 14px; color: #999; }
.i-lines { width: 30px; height: 14px; color: #a2a2a2; }
.i-plus { width: 16px; height: 16px; color: #777; }
.i-pen { width: 14px; height: 17px; color: #777; }
.i-x { width: 16px; height: 16px; color: #777; }
.i-copy { width: 14px; height: 16px; }
.i-caret { width: 10px; height: 6px; color: #72777c; }
.i-caret-d { width: 8px; height: 5px; color: #72777c; transform: rotate(180deg); }
.i-vee { width: 12px; height: 8px; color: #444; }

.row { background: #f4f4f4; padding: 0 14px; margin-bottom: 15px; display: flex; flex-direction: column; }
.ctl { height: 25px; display: flex; align-items: center; justify-content: center; gap: 4px; padding-bottom: 1px; }
.foot { height: 25px; display: flex; justify-content: center; padding-top: 5px; }
.foot-low { padding-top: 16px; }
.foot-edge { padding-top: 17px; }
.el { display: flex; padding: 11px; padding-bottom: 0; gap: 10px; }
.el-row { background: #fff; height: 55px; border-radius: 2px; flex: none; }
.el-ic { width: 32px; height: 32px; border-radius: 50%; background: #f4f4f4; display: flex; align-items: center; justify-content: center; flex: none; }
.i-gear { width: 14px; height: 14px; color: #333; }
.i-pic { width: 13px; height: 13px; color: #333; }
.el-t { margin-top: -1px; font-size: 12.800px; line-height: 18px; color: #333; white-space: nowrap; }
.el-s { font-size: 11px; font-style: italic; line-height: 14px; color: #999; white-space: nowrap; }
.el-caps { letter-spacing: .2px; }
.el-long { font-size: 10.800px; }
.cols { display: grid; gap: 30px; }
.cols-2 { grid-template-columns: 313px 1000px; height: 164px; align-items: start; }
.cols-6 { grid-template-columns: repeat(6, 1fr); height: 105px; }
.col { background: #fff; display: flex; flex-direction: column; height: 100%; overflow: hidden; }
.col-short { height: 105px; }
.ctl-col { flex: none; }
.col .el { padding-left: 25px; height: 47px; flex: none; }
.el-next { margin-top: 12px; }
.foot-col { height: 33px; flex: none; display: flex; justify-content: center; padding-top: 13px; color: #777; }

/* right column */
.rightcol { width: 280px; flex: none; display: flex; flex-direction: column; gap: 21px; }
.box { background: #fff; border: 1px solid #ccd0d4; flex: none; }
.box-pub { margin-top: -10px; border-top: 0; height: 221px; display: flex; flex-direction: column; }
.pub-row { height: 34px; padding-left: 10px; display: flex; align-items: center; gap: 7px; white-space: nowrap; color: #444; font-size: 12.500px; }
.pub-row b { font-weight: 400; color: #32373c; }
.pub-last { height: 31px; }
.pub-i { width: 19px; height: 19px; }
.yoast-out { width: 18px; height: 18px; border: 1px solid #b8b8b8; border-radius: 4px; color: #999; text-align: center; font: italic 700 18px/16px "Liberation Serif", serif; flex: none; }
.yoast-red { border-color: #d64b4b; color: #d02020; }
.pub-foot { margin-top: auto; height: 53px; background: #f5f5f5; border-top: 1px solid #ddd; display: flex; align-items: center; justify-content: space-between; padding: 2px 10px 0 10px; }
.trash { color: #a00; font-size: 12.400px; }
.btn-update { width: 68px; height: 32px; background: #0073aa; border-radius: 3px; color: #fff; line-height: 32px; text-align: center; font-size: 13px; }
.box-h { height: 37px; border-bottom: 1px solid #ccd0d4; display: flex; align-items: center; justify-content: space-between; padding: 0 12px 0 12px; }
.box-h h3 { font-size: 13.200px; font-weight: 600; color: #23282d; }
.box-b { padding: 0 12px; }
.box-attr { height: 238px; }
.f-l { margin-top: 13px; line-height: 18px; color: #23282d; font-size: 13px; }
.f-l2 { margin-top: 13px; }
.sel { border: 1px solid #7e8993; border-radius: 3px; background: #fff; color: #32373c; display: flex; align-items: center; white-space: nowrap; }
.sel-tpl { width: 254px; height: 32px; margin-top: 6px; padding: 0 5px 0 7px; font-size: 13.500px; justify-content: space-between; }
.sel-clip { overflow: hidden; width: 226px; }
.num { width: 73px; height: 30px; margin-top: 7px; border: 1px solid #7e8993; border-radius: 3px; padding-left: 8px; line-height: 28px; color: #32373c; }
.help { margin-top: 15px; line-height: 18px; font-size: 12.500px; }
.box-rev { height: 347px; }
.rev-line { display: flex; align-items: center; height: 20px; margin-top: 17px; }
.rev-line2 { height: 30px; margin-top: 26px; }
.rev-l { width: 120px; color: #555; white-space: nowrap; font-size: 12.600px; }
.toggle { width: 50px; height: 20px; background: #eee; border-radius: 10px; display: flex; align-items: center; justify-content: flex-end; gap: 4px; padding-right: 6px; font-size: 10px; color: #888; }
.toggle i { width: 12px; height: 12px; border-radius: 50%; background: #666; }
.sel-def { width: 78px; height: 30px; margin-left: 1px; padding: 0 6px 0 8px; font-size: 14px; justify-content: space-between; }
.ver { display: flex; align-items: center; height: 34px; margin-top: 16px; gap: 20px; }
.ver-1 { margin-top: 39px; }
.ver-i { width: 25px; height: 18px; }
.ver-l { line-height: 15px; color: #666; font-size: 12.500px; }
.ver-n { font-weight: 700; line-height: 15px; color: #111; font-size: 12.500px; }
.unlock { width: 247px; height: 28px; margin: 33px 0 0 4px; background: #5e35b1; border-radius: 3px; color: #fff; text-align: center; font: 500 13px/28px Roboto, sans-serif; }
.box-feat { height: 120px; }
.setimg { display: block; margin-top: 14px; font-size: 12.600px; }

/* page scrollbar */
.pagebar { width: 17px; background: #f1f1f1; display: flex; flex-direction: column; align-items: center; }
.pb-up { width: 8px; height: 5px; margin-top: 7px; color: #505050; }
.pb-thumb { width: 14px; height: 170px; margin-top: 57px; background: #c1c1c1; }
.pb-fill { flex: 1; }
.pb-down { width: 8px; height: 5px; margin-bottom: 7px; color: #505050; transform: rotate(180deg); }

/* taskbar */
.taskbar { height: 40px; background: #101010; display: flex; align-items: center; flex: none; position: relative; color: #fff; }
.tk { width: 49px; height: 40px; display: flex; align-items: center; justify-content: center; }
.tk svg { width: 22px; height: 22px; }
.tk-start { width: 47px; margin-right: 3px; }
.tk-start svg { width: 16px; height: 16px; }
.tk-chrome { background: #333; }
.app-box { width: 22px; height: 22px; border: 1.500px solid; font-size: 12px; line-height: 19px; text-align: center; font-weight: 600; }
.app-dw { color: #b4e000; border-color: #97d300; background: #0a1a00; }
.app-ps { color: #31c5f0; border-color: #00a8e8; background: #001d26; }
.app-ai { color: #ff9a00; border-color: #330000; background: #330000; border-radius: 3px; }
.ul { position: absolute; bottom: 0; height: 2px; background: #aaa; }
.ul-1 { left: 398px; width: 40px; }
.ul-2 { left: 447px; width: 40px; }
.ul-3 { left: 496px; width: 40px; }
.ul-4 { left: 541px; width: 48px; }
.tk-spacer { flex: 1; }
.tray { width: 14px; height: 14px; margin-right: 9px; }
.tray-wifi { width: 16px; margin-right: 7px; }
.tray-vol { width: 16px; margin-right: 3px; }
.tray-bat { width: 16px; margin-right: 9px; }
.clock { width: 66px; text-align: center; font-size: 12px; line-height: 18px; }
.tray-note { width: 16px; height: 16px; margin: 0 25px 0 12px; }

/* pointer */
.pointer { position: absolute; left: 474px; top: 71px; width: 320px; height: 83px; background: #fff; border: 1px solid #dfdfdf; box-shadow: 0 3px 6px rgba(0,0,0,.13); padding: 13px 20px; }
.pointer::before { content: ""; position: absolute; left: -14px; top: 5px; border: 13px solid transparent; border-right-color: #fff; border-left-width: 0; }
.pointer-t { font-size: 12.300px; line-height: 18px; color: #444; }
.pointer-f { position: absolute; right: 15px; bottom: 14px; }
.finish { display: flex; align-items: center; gap: 4px; color: #0073aa; font-size: 12.300px; line-height: 18px; }
.finish svg { width: 12px; height: 12px; }

/* modal */
.modal { position: absolute; left: 958px; top: 152px; width: 650px; height: 727px; background: #fff; box-shadow: 0 1px 4px rgba(0,0,0,.3); display: flex; flex-direction: column; }
.m-head { height: 57px; flex: none; background: #0473aa; color: #fff; display: flex; align-items: center; padding: 0 22px 0 18px; position: relative; z-index: 1; }
.m-head h2 { flex: 1; font-size: 18px; font-weight: 400; }
.m-gear { width: 24px; height: 24px; margin-left: 1px; color: #cfe5f1; }
.m-min { width: 17px; height: 2px; margin: 14px 11px 0 7px; background: #cfe5f1; }
.m-x { width: 20px; height: 20px; margin-right: -1px; color: #cfe5f1; }
.m-main { height: 586px; display: flex; flex: none; overflow: hidden; }
.m-body { width: 633px; padding: 0 18px; margin-top: -19px; flex: none; }
.m-l { display: block; font-size: 13px; font-weight: 500; line-height: 20px; color: #555; margin-bottom: 4px; }
.m-sel { width: 400px; height: 46px; border: 1px solid #7e8993; border-radius: 3px; display: flex; align-items: center; justify-content: space-between; padding: 0 8px 0 6px; font-size: 13.500px; color: #444; }
.m-in { width: 597px; height: 45px; border: 1px solid #7e8993; border-radius: 3px; padding-left: 6px; line-height: 43px; font-size: 13px; color: #444; }
.hint { margin: 9px 0 15px; font-size: 13px; font-style: italic; line-height: 18px; color: #999; white-space: nowrap; }
.check { display: block; width: 16px; height: 16px; margin: 8px 0 0 5px; border: 1px solid #7e8993; border-radius: 3px; }
.m-scroll { width: 17px; background: #f1f1f1; display: flex; flex-direction: column; align-items: center; }
.ms-up { width: 8px; height: 5px; margin-top: 7px; color: #505050; }
.ms-thumb { width: 13px; height: 279px; margin-top: 278px; background: #c1c1c1; }
.ms-down { width: 8px; height: 5px; margin-top: 5px; color: #888; transform: rotate(180deg); }
.m-foot { flex: 1; background: #f5f5f5; display: flex; gap: 10px; padding: 18px; }
.m-btn { width: 140px; height: 48px; border-radius: 2px; color: #fff; text-align: center; font-size: 13px; line-height: 48px; }
.m-close { background: #b9b9b9; }
.m-save { background: #0473aa; }
```
